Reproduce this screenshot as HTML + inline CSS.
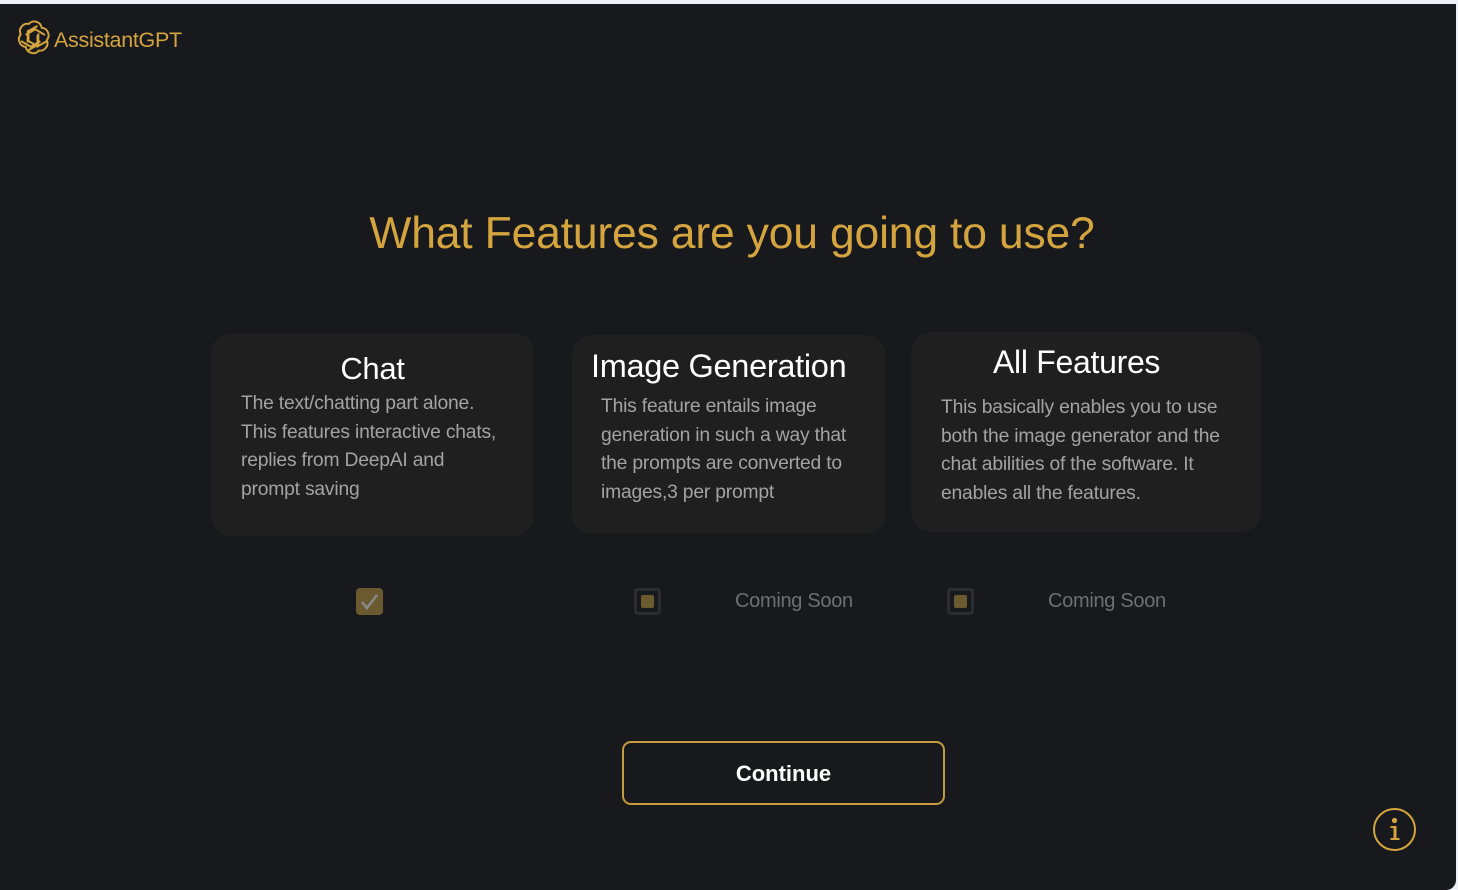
<!DOCTYPE html>
<html><head><meta charset="utf-8"><style>
*{margin:0;padding:0;box-sizing:border-box}
html,body{width:1458px;height:890px;overflow:hidden;background:#eef1f8}
#app{position:absolute;left:0;top:4px;width:1456px;height:886px;background:#18191d;border-bottom-right-radius:10px;font-family:"Liberation Sans",sans-serif}
.abs{position:absolute}
.logo{left:54px;top:24px;font-size:21.5px;color:#d4a53f;letter-spacing:-0.3px}
h1{position:absolute;left:0;width:1464px;text-align:center;top:205px;font-weight:normal;font-size:44.5px;color:#d4a53f;letter-spacing:-0.2px}
.card{position:absolute;background:#1f1f1f;border-radius:20px}
.card h2{position:absolute;left:0;right:0;text-align:center;font-weight:normal;color:#fff;font-size:31px;letter-spacing:-0.3px;white-space:nowrap}
.card p{position:absolute;color:#a3a3a3;font-size:19.3px;line-height:28.5px;letter-spacing:-0.2px;white-space:nowrap}
.cb{position:absolute;width:27px;height:27px;border-radius:4px}
.cb.off{border:3px solid #2c2d30;background:#18191d}
.cb.off::after{content:"";position:absolute;left:4px;top:4px;width:13px;height:13px;background:#6b5a2f;border-radius:2px}
.cs{position:absolute;top:586px;color:#6f6f6f;font-size:20px;letter-spacing:-0.3px}
.btn{position:absolute;left:622px;top:737px;width:323px;height:64px;border:2px solid #c59a3c;border-radius:9px;color:#fff;font-weight:bold;font-size:22px;text-align:center;line-height:62px}
</style></head><body><div id="app">
<svg class="abs" style="left:15px;top:16px" width="36" height="36" viewBox="0 0 24 24" fill="none" stroke="#d4a53f" stroke-width="1.3"><path d="M9.2 2.6a5 5 0 0 1 8.6 2.6 5 5 0 0 1 3.4 8.2 5 5 0 0 1-5.3 7 5 5 0 0 1-8.7-2.5 5 5 0 0 1-3.4-8.2 5 5 0 0 1 5.4-7.1z"/><path d="M9 6.5v7.5l6.5 3.7M15 3.9 8.5 7.6 8.4 15M20 10l-6.5-3.8-6.4 3.7M15 10v7.6l6.4-3.6M9 20.1l6.5-3.7.1-7.5M4 14l6.5 3.8 6.4-3.7"/></svg>
<div class="abs logo">AssistantGPT</div>
<h1>What Features are you going to use?</h1>
<div class="card" style="left:211px;top:329px;width:323px;height:203px"><h2 style="top:18px">Chat</h2><p style="left:30px;top:57px">The text/chatting part alone.<br>This features interactive chats,<br>replies from DeepAI and<br>prompt saving</p></div>
<div class="card" style="left:572px;top:331px;width:314px;height:199px"><h2 style="top:13px;left:19px;right:auto;font-size:32.5px">Image Generation</h2><p style="left:29px;top:58px">This feature entails image<br>generation in such a way that<br>the prompts are converted to<br>images,3 per prompt</p></div>
<div class="card" style="left:911px;top:328px;width:350px;height:200px"><h2 style="top:12px;left:82px;right:auto;font-size:32px">All Features</h2><p style="left:30px;top:62px">This basically enables you to use<br>both the image generator and the<br>chat abilities of the software. It<br>enables all the features.</p></div>
<div class="cb" style="left:356px;top:584px;background:#6b5a2f"><svg width="27" height="27" viewBox="0 0 27 27"><path d="M6 14l5 6 10-13" fill="none" stroke="#8a8a8a" stroke-width="2.5"/></svg></div>
<div class="cb off" style="left:634px;top:584px"></div>
<div class="cs" style="left:735px">Coming Soon</div>
<div class="cb off" style="left:947px;top:584px"></div>
<div class="cs" style="left:1048px">Coming Soon</div>
<div class="btn">Continue</div>
<svg class="abs" style="left:1372px;top:803px" width="46" height="46" viewBox="0 0 46 46"><circle cx="22.5" cy="22.5" r="20.5" fill="none" stroke="#d4a53f" stroke-width="2"/><circle cx="22.5" cy="13.5" r="2.6" fill="#d4a53f"/><path d="M18.5 19h6v12h3v2h-9v-2h3v-10h-3z" fill="#d4a53f"/></svg>
</div></body></html>
